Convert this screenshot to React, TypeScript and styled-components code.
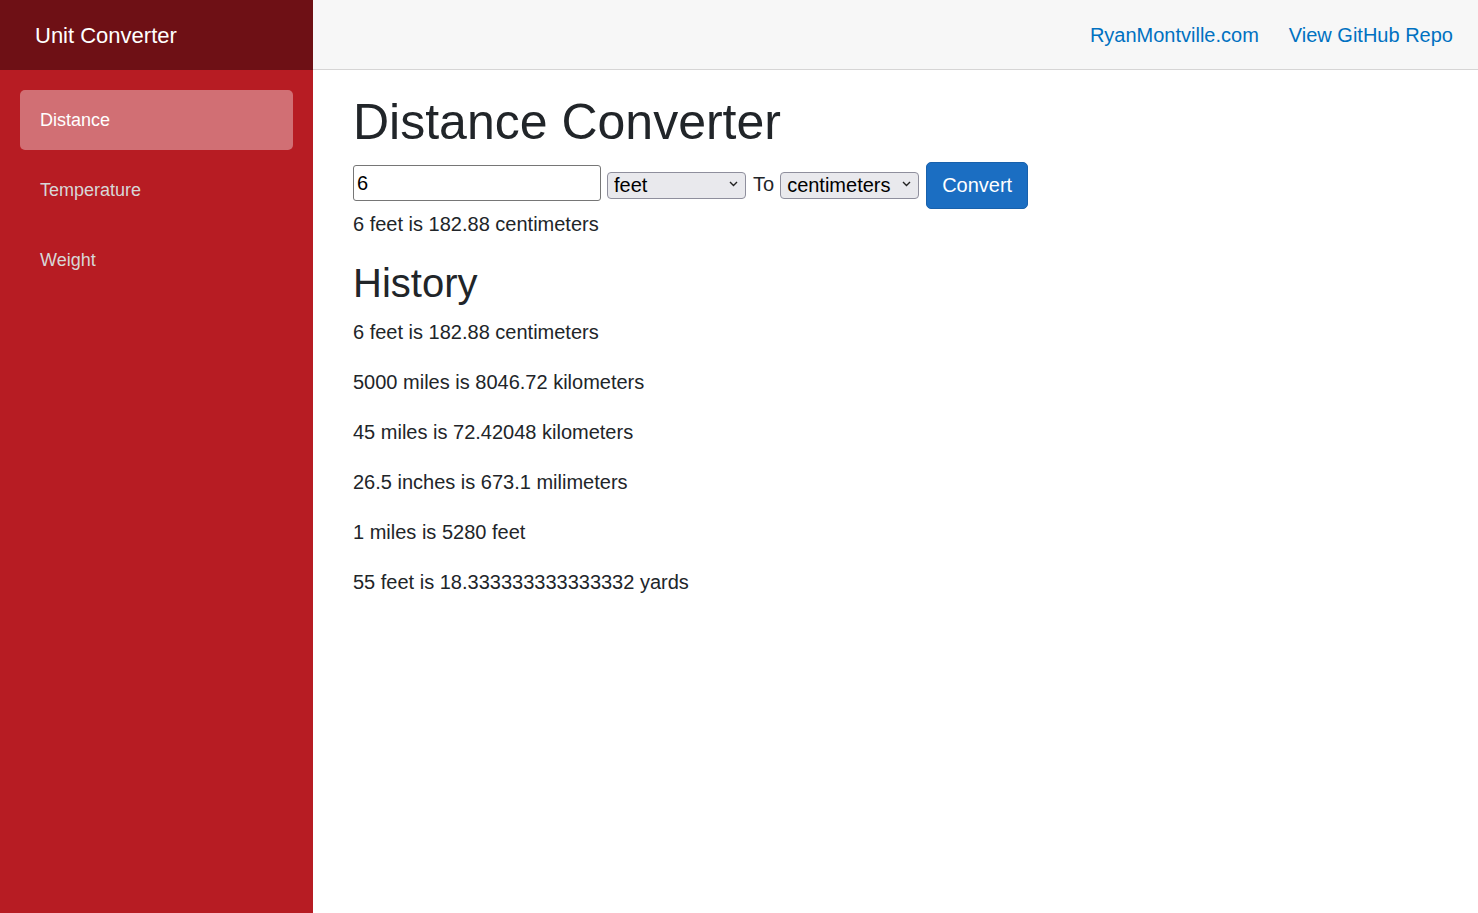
import React from "react";
import styled, { createGlobalStyle } from "styled-components";

const GlobalStyle = createGlobalStyle`
  html, body { margin: 0; padding: 0; height: 100%; }
  body {
    font-family: "Liberation Sans", Arial, Helvetica, sans-serif;
    font-size: 20px;
    line-height: 1.5;
    color: #212529;
    background: #fff;
  }
  #root { height: 100%; }
  * { box-sizing: border-box; }
`;

const Page = styled.div`
  display: flex;
  min-height: 100vh;
`;

const Sidebar = styled.aside`
  width: 313px;
  flex-shrink: 0;
  background: #b71c23;
  display: flex;
  flex-direction: column;
`;

const Brand = styled.div`
  height: 70px;
  background: rgba(0, 0, 0, 0.4);
  display: flex;
  align-items: center;
  padding-left: 35px;
  color: #fff;
  font-size: 22px;
`;

const NavList = styled.nav`
  display: flex;
  flex-direction: column;
  padding: 20px 20px 0;
  gap: 10px;
`;

const NavLink = styled.a<{ $active?: boolean }>`
  height: 60px;
  display: flex;
  align-items: center;
  padding: 0 20px;
  border-radius: 5px;
  font-size: 18px;
  text-decoration: none;
  color: ${(p) => (p.$active ? "#fff" : "#d7d7d7")};
  background: ${(p) => (p.$active ? "rgba(255,255,255,0.37)" : "transparent")};
`;

const Main = styled.main`
  flex: 1;
  display: flex;
  flex-direction: column;
`;

const TopRow = styled.header`
  height: 70px;
  background: #f7f7f7;
  border-bottom: 1px solid #d6d5d5;
  display: flex;
  align-items: center;
  justify-content: flex-end;
  gap: 30px;
  padding-right: 25px;
`;

const TopLink = styled.a`
  color: #0071c1;
  text-decoration: none;
  white-space: nowrap;
  font-size: 20px;
`;

const Content = styled.section`
  padding: 22px 30px 0 40px;
`;

const H1 = styled.h1`
  font-size: 50px;
  font-weight: 400;
  line-height: 1.2;
  margin: 0 0 10px;
`;

const H2 = styled.h2`
  font-size: 40px;
  font-weight: 400;
  line-height: 1.2;
  margin: 0 0 10px;
`;

const FormRow = styled.div`
  display: flex;
  align-items: flex-start;
  height: 47px;
`;

const TextInput = styled.input`
  width: 248px;
  height: 36px;
  margin: 3px 6px 0 0;
  border: 1px solid #767676;
  border-radius: 3px;
  padding: 0 3px;
  font-family: "Liberation Sans", Arial, sans-serif;
  font-size: 20px;
  color: #000;
  background: #fff;
`;

const SelectWrap = styled.div`
  position: relative;
  width: 139px;
  height: 27px;
  margin-top: 8px;
`;

const Select = styled.select`
  appearance: none;
  width: 100%;
  height: 100%;
  border: 1px solid #8f8f9d;
  border-radius: 4px;
  background: #e9e9ed;
  padding: 0 20px 0 6px;
  font-family: "Liberation Sans", Arial, sans-serif;
  font-size: 20px;
  line-height: 25px;
  color: #000;
`;

const Chevron = styled.svg`
  position: absolute;
  right: 8px;
  top: 11px;
  width: 9px;
  height: 6px;
  pointer-events: none;
`;

const ToLabel = styled.span`
  font-size: 20px;
  line-height: 30px;
  margin: 7px 6px 0 7px;
`;

const Button = styled.button`
  height: 47px;
  margin-left: 7px;
  padding: 0 15px;
  background: #1b6ec2;
  border: 1px solid #1861ac;
  border-radius: 5px;
  color: #fff;
  font-family: "Liberation Sans", Arial, sans-serif;
  font-size: 20px;
`;

const Para = styled.p`
  margin: 0 0 20px;
  line-height: 30px;
`;

const units = [
  "inches",
  "feet",
  "yards",
  "miles",
  "milimeters",
  "centimeters",
  "meters",
  "kilometers",
];

function UnitSelect({ value }: { value: string }) {
  return (
    <SelectWrap>
      <Select defaultValue={value}>
        {units.map((u) => (
          <option key={u} value={u}>
            {u}
          </option>
        ))}
      </Select>
      <Chevron viewBox="0 0 9 6">
        <path d="M1 1 L4.5 4.5 L8 1" fill="none" stroke="#222" strokeWidth="1.4" />
      </Chevron>
    </SelectWrap>
  );
}

const history = [
  "6 feet is 182.88 centimeters",
  "5000 miles is 8046.72 kilometers",
  "45 miles is 72.42048 kilometers",
  "26.5 inches is 673.1 milimeters",
  "1 miles is 5280 feet",
  "55 feet is 18.333333333333332 yards",
];

export default function App() {
  return (
    <>
      <GlobalStyle />
      <Page>
        <Sidebar>
          <Brand>Unit Converter</Brand>
          <NavList>
            <NavLink $active>Distance</NavLink>
            <NavLink>Temperature</NavLink>
            <NavLink>Weight</NavLink>
          </NavList>
        </Sidebar>
        <Main>
          <TopRow>
            <TopLink href="#">RyanMontville.com</TopLink>
            <TopLink href="#">View GitHub Repo</TopLink>
          </TopRow>
          <Content>
            <H1>Distance Converter</H1>
            <FormRow>
              <TextInput defaultValue="6" />
              <UnitSelect value="feet" />
              <ToLabel>To</ToLabel>
              <UnitSelect value="centimeters" />
              <Button>Convert</Button>
            </FormRow>
            <Para>6 feet is 182.88 centimeters</Para>
            <H2>History</H2>
            {history.map((h, i) => (
              <Para key={i}>{h}</Para>
            ))}
          </Content>
        </Main>
      </Page>
    </>
  );
}
